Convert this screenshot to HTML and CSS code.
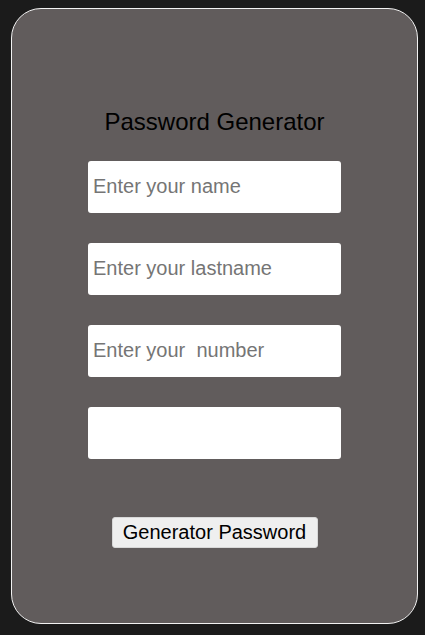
FILE: index.html
```html
<!DOCTYPE html>
<html>
<head>
<meta charset="utf-8">
<link rel="stylesheet" href="styles.css">
</head>
<body>
<div class="card">
  <h1 class="title">Password Generator</h1>
  <div class="fields">
    <input class="field" type="text" placeholder="Enter your name">
    <input class="field" type="text" placeholder="Enter your lastname">
    <input class="field" type="text" placeholder="Enter your  number">
    <input class="field" type="text">
  </div>
  <button class="btn">Generator Password</button>
</div>
</body>
</html>
```
FILE: styles.css
```css
html, body {
  margin: 0;
  padding: 0;
  background: #1b1b1b;
}
body {
  padding: 8px 0 0 11px;
  font-family: "Liberation Sans", Arial, sans-serif;
}
.card {
  box-sizing: border-box;
  width: 407px;
  height: 616px;
  background: #615c5c;
  border: 1px solid #f2f2f2;
  border-radius: 30px;
  display: flex;
  flex-direction: column;
  align-items: center;
  padding-top: 99px;
}
.title {
  margin: 0;
  font-size: 24px;
  font-weight: normal;
  line-height: 28px;
  color: #000;
}
.fields {
  display: flex;
  flex-direction: column;
  gap: 30px;
  margin-top: 25px;
}
.field {
  box-sizing: border-box;
  width: 253px;
  height: 52px;
  border: none;
  border-radius: 3px;
  background: #fff;
  padding: 0 0 2px 5px;
  font-family: "Liberation Sans", Arial, sans-serif;
  font-size: 20px;
  color: #000;
  outline: none;
}
.field::placeholder {
  color: #757575;
}
.btn {
  margin-top: 58px;
  box-sizing: border-box;
  width: 206px;
  height: 31px;
  background: #efefef;
  border: 1px solid #d8d8d8;
  border-radius: 3px;
  font-family: "Liberation Sans", Arial, sans-serif;
  font-size: 20px;
  color: #000;
  padding: 0;
}
```
